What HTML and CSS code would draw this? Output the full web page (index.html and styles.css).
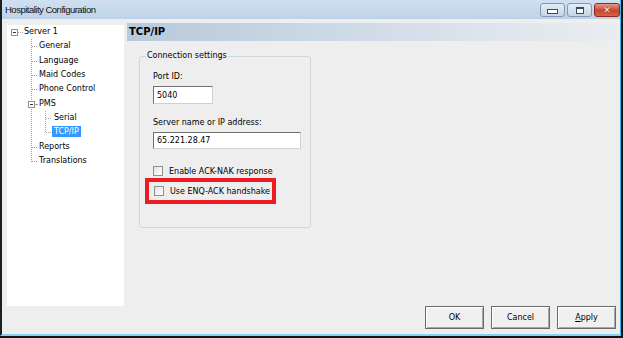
FILE: index.html
```html
<!DOCTYPE html>
<html lang="en">
<head>
  <meta charset="UTF-8" />
  <title>Hospitality Configuration</title>
  <link rel="stylesheet" href="styles.css">
</head>
<body>

  <div class="window">
    <div class="titlebar">
      <span class="title">Hospitality Configuration</span>
      <div class="caption-btns">
        <span class="cap min"><i></i></span>
        <span class="cap max"><i></i></span>
        <span class="cap close">&#x2715;</span>
      </div>
    </div>

    <div class="main">
      <div class="tree">
        <div class="node root"><span class="exp"></span><span class="label">Server 1</span></div>
        <div class="kids l1">
          <div class="node">General</div>
          <div class="node">Language</div>
          <div class="node">Maid Codes</div>
          <div class="node">Phone Control</div>
          <div class="node parent"><span class="exp"></span>PMS</div>
          <div class="kids l2">
            <div class="node">Serial</div>
            <div class="node"><span class="sel">TCP/IP</span></div>
          </div>
          <div class="node">Reports</div>
          <div class="node">Translations</div>
        </div>
      </div>

      <div class="pane">
        <div class="pane-head">TCP/IP</div>
        <fieldset class="group">
          <legend>Connection settings</legend>
          <div class="fields">
            <label class="lbl" for="port">Port ID:</label>
            <input class="txt port" id="port" type="text" value="5040">
            <label class="lbl srv-lbl" for="srv">Server name or IP address:</label>
            <input class="txt srv" id="srv" type="text" value="65.221.28.47">
            <div class="chk first"><input type="checkbox" class="check"><span>Enable ACK-NAK response</span></div>
            <div class="marked">
              <div class="chk"><input type="checkbox" class="check"><span>Use ENQ-ACK handshake</span></div>
            </div>
          </div>
        </fieldset>
      </div>
    </div>

    <div class="footer">
      <button>OK</button>
      <button>Cancel</button>
      <button><u>A</u>pply</button>
    </div>
  </div>

</body>
</html>
```

FILE: styles.css
```css
body { margin: 0; width: 623px; height: 338px; overflow: hidden; background: #101518; font-family: "DejaVu Sans", sans-serif; font-size: 8px; color: #000; }

.window {
  width: 621px;
  height: 336px;
  box-sizing: border-box;
  border-left: 2px solid #1c1f22;
  border-right: 1px solid #3cb4e6;
  border-bottom: 2px solid #86d3f1;
  background: #eeeeee;
  display: flex;
  flex-direction: column;
}

/* title bar */
.titlebar {
  height: 19px;
  display: flex;
  align-items: center;
  justify-content: space-between;
  background: linear-gradient(#d0e0f1, #bdd2e9);
}
.title { font-family: "Liberation Sans", Arial, sans-serif; font-size: 9.5px; letter-spacing: -0.5px; padding-left: 3px; color: #111; }
.caption-btns { display: flex; align-items: flex-start; height: 19px; padding-top: 3px; box-sizing: border-box; }
.cap {
  width: 25px; height: 14px; box-sizing: border-box; margin-left: 2px;
  border: 1px solid #8399b3; border-radius: 3px;
  background: linear-gradient(#e3ecf6, #c6d6e8);
  display: flex; align-items: center; justify-content: center;
}
.cap.min i { width: 9px; height: 3px; border: 1px solid #3b4a5c; background: #fff; margin-top: 3px; }
.cap.max i { width: 6px; height: 4px; border: 1px solid #3b4a5c; border-top-width: 2px; background: #fff; }
.cap.close {
  width: 26px;
  border-color: #8b2a1d;
  background: linear-gradient(#e49a8a, #c8452f 55%, #d5634a);
  color: #fff; font-size: 9px; font-weight: bold; text-shadow: 0 0 1px #3a0a04;
}

/* main area */
.main {
  height: 287px;
  box-sizing: border-box;
  padding: 4px 4px 0 5px;
  display: flex;
  gap: 3px;
}

.tree {
  width: 117px;
  height: 281px;
  margin-top: 2px;
  background: #fff;
  flex: none;
}
.node { height: 14.33px; line-height: 14.33px; white-space: nowrap; position: relative; }
.root { display: flex; align-items: center; padding-left: 4px; }
.exp {
  width: 7px; height: 7px; box-sizing: border-box;
  border: 1px solid #919191; background: #fff; position: relative; flex: none;
}
.exp::before { content: ''; position: absolute; left: 1px; top: 2px; width: 3px; height: 1px; background: #333; }
.root .exp { margin-right: 6px; }
.root .exp::after { content: ''; position: absolute; left: 6px; top: 2px; width: 5px; border-top: 1px dotted #a0a0a0; }

.kids { border-left: 1px dotted #a0a0a0; }
.kids.l1 { margin-left: 24px; }
.kids.l2 { margin-left: 13px; }
.kids > .node { padding-left: 7px; }
.kids.l2 > .node { padding-left: 8px; }
.kids > .node::after { content: ''; position: absolute; left: 0; top: 50%; width: 5px; border-top: 1px dotted #a0a0a0; }
.kids > .node:last-child::before { content: ''; position: absolute; left: -1px; top: 8px; bottom: 0; width: 1px; background: #fff; }
.kids > .node.parent::after { display: none; }
.parent .exp { position: absolute; left: -4px; top: 4px; }
.parent .exp::after { content: ''; position: absolute; left: 6px; top: 2px; width: 2px; border-top: 1px dotted #a0a0a0; }
.sel { background: #3399ff; color: #fff; padding: 1px 2px; margin-left: -2px; }

/* right pane */
.pane { flex: 1; display: flex; flex-direction: column; }
.pane-head {
  height: 18px; line-height: 18px; padding-left: 2px;
  font-size: 10px; font-weight: bold;
  background: linear-gradient(to right, #b7c9dc, #d6e0ea 60%, #eaedf0);
}

.group {
  margin: 10px 0 0 12px;
  width: 172px;
  height: 177px;
  box-sizing: border-box;
  padding: 0 0 0 6px;
  border: 1px solid #d0d6dc;
  border-radius: 3px;
  min-inline-size: 0;
}
.group legend { padding: 0 1px; line-height: 10px; }
.fields { padding: 10px 0 0 7px; }

.lbl { display: block; line-height: 12px; }
.txt {
  display: block; box-sizing: border-box; margin: 3px 0 0;
  font-family: "DejaVu Sans", sans-serif; font-size: 8px; color: #000;
  padding: 0 0 0 3px;
  border: 1px solid; border-color: #707070 #d0d0d0 #d0d0d0 #707070;
  background: #fff; outline: none;
}
.port { width: 60px; height: 18px; }
.srv-lbl { margin-top: 13px; }
.srv { width: 148px; height: 17px; }

.chk { display: flex; align-items: center; gap: 6px; height: 12px; }
.chk.first { margin-top: 16px; }
.check {
  appearance: none; margin: 0; width: 10px; height: 10px; box-sizing: border-box;
  border: 1px solid #8e8f8f; background: linear-gradient(135deg, #e2e2e2, #fff);
}
.marked {
  margin: 1px 0 0 -8px;
  width: 131px; height: 26px; box-sizing: border-box;
  border: 4px solid #ed1c24;
  padding: 3px 0 0 5px;
}

/* footer */
.footer {
  height: 28px;
  display: flex;
  justify-content: flex-end;
  gap: 7px;
  padding-right: 4px;
}
.footer button {
  width: 59px; height: 23px; margin: 0; padding: 0;
  font-family: "DejaVu Sans", sans-serif; font-size: 8px; color: #000;
  background: #f0f0f0;
  border: 1px solid #6b6b6b;
  box-shadow: inset 1px 1px #fff, inset -1px -1px #a8a8a8;
}
```
